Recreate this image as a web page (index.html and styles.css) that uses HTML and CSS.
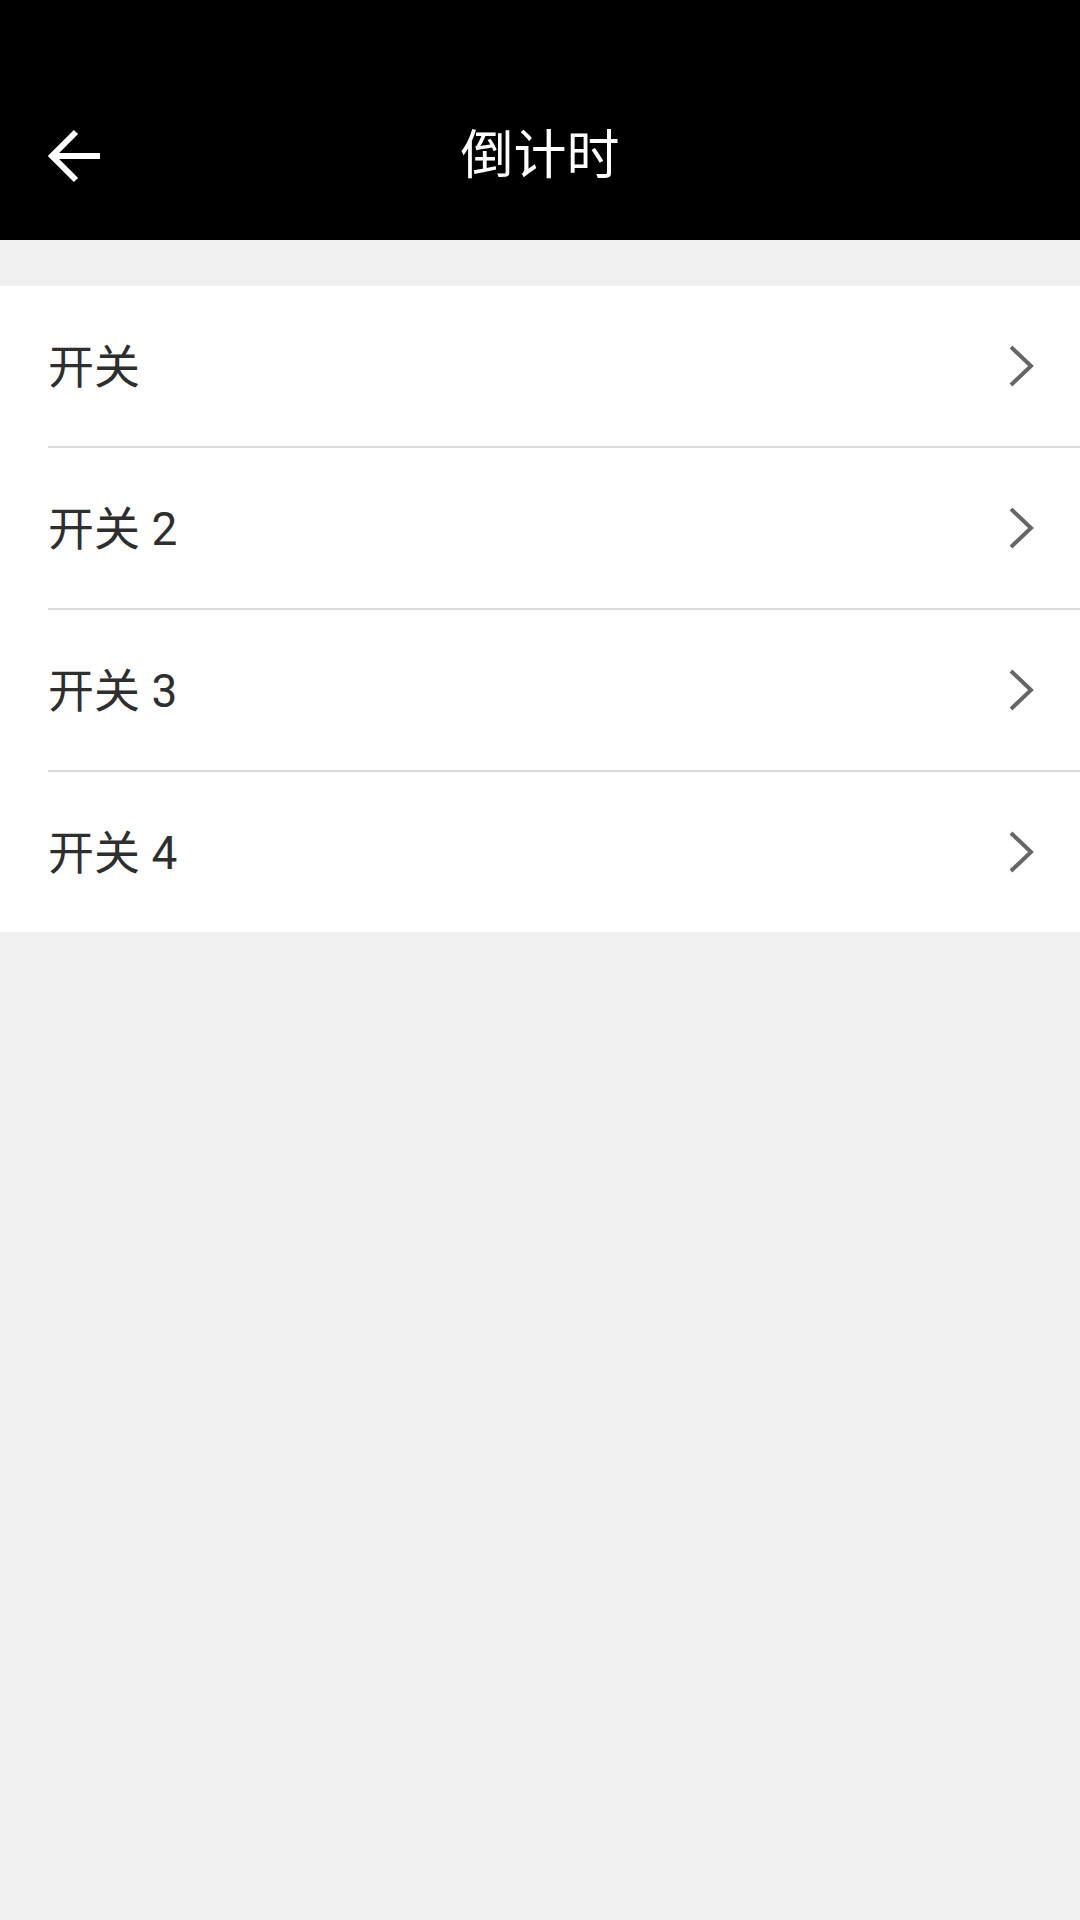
FILE: index.html
```html
<!DOCTYPE html>
<html lang="zh">
<head>
<meta charset="utf-8">
<title>倒计时</title>
<link rel="stylesheet" href="styles.css">
</head>
<body>
<header class="header">
  <div class="navbar">
    <svg class="back" width="56" height="56" viewBox="0 0 56 56">
      <path d="M53 28 H6 M29 4 L5 28 L29 52" fill="none" stroke="#fff" stroke-width="6"/>
    </svg>
    <h1 class="title">倒计时</h1>
  </div>
</header>
<main class="list">
  <div class="row"><span class="label">开关</span><svg class="chev" width="26" height="44" viewBox="0 0 26 44"><path d="M3 3 L23 22 L3 41" fill="none" stroke="#666" stroke-width="4"/></svg></div>
  <div class="row"><span class="label">开关 2</span><svg class="chev" width="26" height="44" viewBox="0 0 26 44"><path d="M3 3 L23 22 L3 41" fill="none" stroke="#666" stroke-width="4"/></svg></div>
  <div class="row"><span class="label">开关 3</span><svg class="chev" width="26" height="44" viewBox="0 0 26 44"><path d="M3 3 L23 22 L3 41" fill="none" stroke="#666" stroke-width="4"/></svg></div>
  <div class="row"><span class="label">开关 4</span><svg class="chev" width="26" height="44" viewBox="0 0 26 44"><path d="M3 3 L23 22 L3 41" fill="none" stroke="#666" stroke-width="4"/></svg></div>
</main>
</body>
</html>
```
FILE: styles.css
```css
html, body {
  margin: 0;
  padding: 0;
  background: #f0f0f0;
  font-family: Roboto, "Noto Sans CJK SC", sans-serif;
  width: 1080px;
  height: 1920px;
}
.header {
  background: #000;
  height: 240px;
  padding-top: 76px;
  box-sizing: border-box;
}
.navbar {
  position: relative;
  height: 160px;
  display: flex;
  align-items: center;
  justify-content: center;
}
.back {
  position: absolute;
  left: 47px;
  top: 52px;
}
.title {
  margin: 0;
  color: #fff;
  font-size: 53px;
  font-weight: 400;
  line-height: 1;
}
.list {
  margin-top: 46px;
  background: #fff;
}
.row {
  height: 160px;
  margin-left: 48px;
  padding-right: 46px;
  display: flex;
  align-items: center;
  justify-content: space-between;
  border-top: 2px solid #dadada;
}
.row:first-child {
  border-top: none;
}
.label {
  font-size: 46px;
  color: #2e2e2e;
  line-height: 1;
  padding-top: 2px;
}
.chev {
  display: block;
}
```
